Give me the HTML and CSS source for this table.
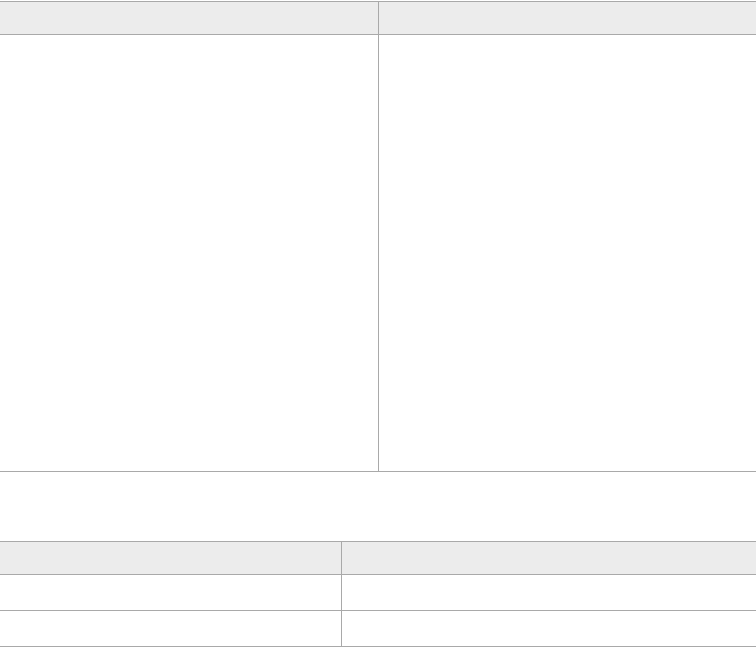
FILE: index.html
```html
<!DOCTYPE html>
<html lang="en">
<head>
<meta charset="utf-8">
<title>Tables</title>
<link rel="stylesheet" href="styles.css">
</head>
<body>
<table class="grid grid-main">
  <colgroup><col class="c-main-1"><col></colgroup>
  <thead>
    <tr><th></th><th></th></tr>
  </thead>
  <tbody>
    <tr class="tall"><td></td><td></td></tr>
  </tbody>
</table>
<table class="grid grid-list">
  <colgroup><col class="c-list-1"><col></colgroup>
  <thead>
    <tr><th></th><th></th></tr>
  </thead>
  <tbody>
    <tr><td></td><td></td></tr>
    <tr><td></td><td></td></tr>
  </tbody>
</table>
</body>
</html>
```
FILE: styles.css
```css
html, body {
  margin: 0;
  padding: 0;
  background: #ffffff;
  font-family: "Liberation Sans", Arial, sans-serif;
}
body {
  padding-top: 1px;
}
.grid {
  width: 100%;
  table-layout: fixed;
  border-collapse: separate;
  border-spacing: 0;
  border-top: 1px solid #a9a9a9;
}
.grid th,
.grid td {
  box-sizing: border-box;
  padding: 0;
  border-bottom: 1px solid #a9a9a9;
}
.grid th:first-child,
.grid td:first-child {
  border-right: 1px solid #a9a9a9;
}
.grid th {
  background: #ececec;
  height: 33px;
}
.grid td {
  height: 36px;
}
.grid .tall td {
  height: 437px;
}
.c-main-1 { width: 379px; }
.c-list-1 { width: 342px; }
.grid-list {
  margin-top: 69px;
}
```
